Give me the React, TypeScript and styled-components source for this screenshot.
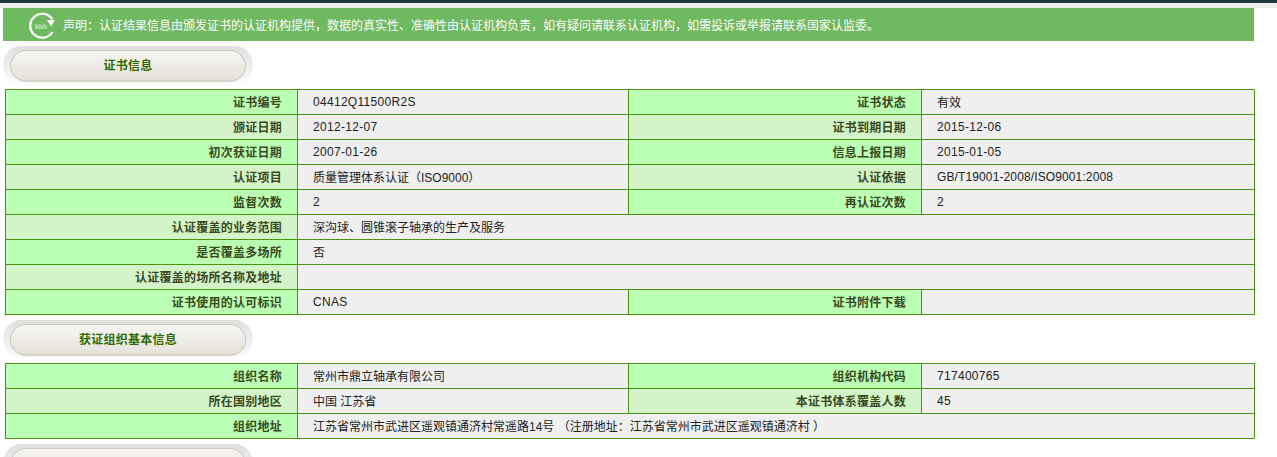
import React from "react";
import styled, { createGlobalStyle } from "styled-components";

const Global = createGlobalStyle`
  html, body { margin: 0; padding: 0; background: #fff; overflow: hidden; }
  body { font-family: "Liberation Sans", "Noto Sans CJK SC", sans-serif; font-size: 12px; color: #222; }
`;
const Page = styled.div`
  height: 457px;
  overflow: hidden;
`;
const TopBar = styled.div`
  height: 3px;
  background: #1d3a45;
`;
const TopGap = styled.div`
  height: 5px;
  background: #f0f0f0;
`;
const Notice = styled.div`
  margin-left: 3px;
  width: 1251px;
  height: 33px;
  background: #6fb960;
  color: #fff;
  display: flex;
  align-items: center;
  padding-left: 26px;
  box-sizing: border-box;
  font-size: 12px;
  gap: 7px;
`;
const NoticeIcon = styled.svg`
  margin-top: 2px;
  flex: none;
`;
const PillWrap = styled.div`
  margin: 5px 0 5px 3px;
  width: 250px;
  height: 38px;
  box-sizing: border-box;
  padding-top: 4px;
  border-radius: 19px / 20px;
  background: linear-gradient(#dfdfdf, #ececec 45%, #f7f7f7 90%, #ffffff);
  display: flex;
  align-items: flex-start;
  justify-content: center;
`;
const Pill = styled.div`
  width: 236px;
  height: 32px;
  box-sizing: border-box;
  border-radius: 16px;
  border: 1px solid #cfc8bc;
  border-bottom: 2px solid #d8d2c8;
  background: linear-gradient(#f6f5f2, #e6e2db);
  color: #2f6b00;
  font-weight: bold;
  font-size: 12px;
  letter-spacing: 0.25px;
  display: flex;
  align-items: center;
  justify-content: center;
  padding-bottom: 2px;
`;
const Table = styled.table`
  margin-left: 5px;
  width: 1249px;
  border-collapse: collapse;
  table-layout: fixed;
  border: 1px solid #4a9313;
`;
const Row = styled.tr`
  height: 25px;
`;
const Label = styled.th<{ $tint?: boolean }>`
  background: ${(p) => (p.$tint ? "#d3f3c8" : "#baffb3")};
  border: 1px solid #4a9313;
  color: #3a4a20;
  font-weight: bold;
  font-size: 12px;
  letter-spacing: 0.25px;
  text-align: right;
  padding: 0 15px 2px 0;
`;
const Value = styled.td<{ $kind: string }>`
  background: #efefef;
  border: 1px solid #4a9313;
  color: #222;
  font-size: 12px;
  letter-spacing: ${(p) => (p.$kind === "latin" ? "0.3px" : p.$kind === "spec" ? "0.12px" : "0")};
  padding: 0 0 ${(p) => (p.$kind === "cjk" ? "2px" : "0")} 15px;
`;

const Refresh = () => (
  <NoticeIcon width="27" height="27" viewBox="0 0 27 27" fill="none">
    <path d="M23.5 20A12 12 0 1 1 23.5 7.5" stroke="#fff" strokeWidth="2.2" />
    <path d="M18 8h8l-4 6.5z" fill="#fff" />
    <path d="M7 12v5M9 13v4M11 12v5M13 13v4M15 12v5M17 13v4" stroke="#d8efd2" strokeWidth="1" />
  </NoticeIcon>
);

type Cell = [string, string, string];
type Def = { tint?: boolean; cells: Cell[] };

const cert: Def[] = [
  { cells: [["证书编号", "04412Q11500R2S", "latin"], ["证书状态", "有效", "cjk"]] },
  { tint: true, cells: [["颁证日期", "2012-12-07", "latin"], ["证书到期日期", "2015-12-06", "latin"]] },
  { cells: [["初次获证日期", "2007-01-26", "latin"], ["信息上报日期", "2015-01-05", "latin"]] },
  { tint: true, cells: [["认证项目", "质量管理体系认证（ISO9000）", "cjk"], ["认证依据", "GB/T19001-2008/ISO9001:2008", "spec"]] },
  { cells: [["监督次数", "2", "latin"], ["再认证次数", "2", "latin"]] },
  { tint: true, cells: [["认证覆盖的业务范围", "深沟球、圆锥滚子轴承的生产及服务", "cjk"]] },
  { cells: [["是否覆盖多场所", "否", "cjk"]] },
  { tint: true, cells: [["认证覆盖的场所名称及地址", "", "cjk"]] },
  { cells: [["证书使用的认可标识", "CNAS", "latin"], ["证书附件下载", "", "cjk"]] },
];
const org: Def[] = [
  { cells: [["组织名称", "常州市鼎立轴承有限公司", "cjk"], ["组织机构代码", "717400765", "latin"]] },
  { tint: true, cells: [["所在国别地区", "中国 江苏省", "cjk"], ["本证书体系覆盖人数", "45", "latin"]] },
  { cells: [["组织地址", "江苏省常州市武进区遥观镇通济村常遥路14号 （注册地址：江苏省常州市武进区遥观镇通济村 ）", "cjk"]] },
];

const InfoTable = ({ rows }: { rows: Def[] }) => (
  <Table>
    <colgroup>
      <col style={{ width: 292 }} />
      <col style={{ width: 331 }} />
      <col style={{ width: 293 }} />
      <col style={{ width: 333 }} />
    </colgroup>
    <tbody>
      {rows.map((r, i) => (
        <Row key={i}>
          {r.cells.map(([k, v, kind], j) => (
            <React.Fragment key={j}>
              <Label $tint={r.tint}>{k}</Label>
              <Value $kind={kind} colSpan={r.cells.length === 1 ? 3 : 1}>{v}</Value>
            </React.Fragment>
          ))}
        </Row>
      ))}
    </tbody>
  </Table>
);

export default function App() {
  return (
    <Page>
      <Global />
      <TopBar />
      <TopGap />
      <Notice>
        <Refresh />
        <span>声明：认证结果信息由颁发证书的认证机构提供，数据的真实性、准确性由认证机构负责，如有疑问请联系认证机构，如需投诉或举报请联系国家认监委。</span>
      </Notice>
      <PillWrap><Pill>证书信息</Pill></PillWrap>
      <InfoTable rows={cert} />
      <PillWrap><Pill>获证组织基本信息</Pill></PillWrap>
      <InfoTable rows={org} />
      <PillWrap><Pill /></PillWrap>
    </Page>
  );
}
